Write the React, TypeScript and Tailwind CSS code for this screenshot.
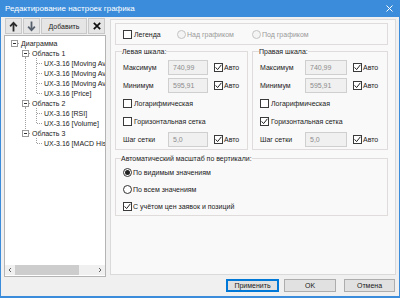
import React from 'react';

type Cell = 'none' | 'vline' | 'tee' | 'ell' | 'boxRoot' | 'boxMid' | 'boxLast';

const TreeCell: React.FC<{ kind: Cell }> = ({ kind }) => {
  const dot = { stroke: '#a0a0a0', strokeWidth: 1, strokeDasharray: '1 1' };
  return (
    <svg width="11" height="10" viewBox="0 0 11 10" className="shrink-0" shapeRendering="crispEdges">
      {(kind === 'vline' || kind === 'tee') && <line x1="5.5" y1="0" x2="5.5" y2="10" {...dot} />}
      {kind === 'ell' && <line x1="5.5" y1="0" x2="5.5" y2="6" {...dot} />}
      {(kind === 'tee' || kind === 'ell') && <line x1="6" y1="5.5" x2="11" y2="5.5" {...dot} />}
      {(kind === 'boxMid' || kind === 'boxLast') && <line x1="5.5" y1="0" x2="5.5" y2="2" {...dot} />}
      {kind === 'boxMid' && <line x1="5.5" y1="9" x2="5.5" y2="10" {...dot} />}
      {kind.startsWith('box') && (
        <>
          <line x1="9" y1="5.5" x2="11" y2="5.5" {...dot} />
          <rect x="2.5" y="2.5" width="6" height="6" fill="#fff" stroke="#9a9a9a" />
          <line x1="4" y1="5.5" x2="7" y2="5.5" stroke="#333" />
        </>
      )}
    </svg>
  );
};

const tree: { text: string; cells: Cell[] }[] = [
  { text: 'Диаграмма', cells: ['boxRoot'] },
  { text: 'Область 1', cells: ['none', 'boxMid'] },
  { text: 'UX-3.16 [Moving Average]', cells: ['none', 'vline', 'tee'] },
  { text: 'UX-3.16 [Moving Average]', cells: ['none', 'vline', 'tee'] },
  { text: 'UX-3.16 [Moving Average]', cells: ['none', 'vline', 'tee'] },
  { text: 'UX-3.16 [Price]', cells: ['none', 'vline', 'ell'] },
  { text: 'Область 2', cells: ['none', 'boxMid'] },
  { text: 'UX-3.16 [RSI]', cells: ['none', 'vline', 'tee'] },
  { text: 'UX-3.16 [Volume]', cells: ['none', 'vline', 'ell'] },
  { text: 'Область 3', cells: ['none', 'boxLast'] },
  { text: 'UX-3.16 [MACD Histogram]', cells: ['none', 'none', 'ell'] },
];

const Check: React.FC<{ checked?: boolean }> = ({ checked }) => (
  <span className="w-[9px] h-[9px] border border-[#3a3a3a] bg-white flex items-center justify-center shrink-0">
    {checked && (
      <svg width="7" height="7" viewBox="0 0 7 7">
        <path d="M0.6 3.4 L2.6 5.6 L6.4 0.8" stroke="#222" strokeWidth="1" fill="none" />
      </svg>
    )}
  </span>
);

const Radio: React.FC<{ checked?: boolean; disabled?: boolean }> = ({ checked, disabled }) => (
  <span
    className={`w-[9px] h-[9px] rounded-full border flex items-center justify-center shrink-0 ${
      disabled ? 'border-[#c4c4c4] bg-[#f4f4f4]' : 'border-[#333] bg-white'
    }`}
  >
    {checked && <span className="w-[5px] h-[5px] rounded-full bg-[#222]" />}
  </span>
);

const ValueRow: React.FC<{ label: string; value: string; inputW: string }> = ({ label, value, inputW }) => (
  <div className="h-[15px] flex items-center">
    <span className="w-[45px] shrink-0 whitespace-nowrap">{label}</span>
    <span className={`${inputW} h-[15px] shrink-0 border border-[#cfcfcf] bg-[#f0f0f0] text-[#8c8c8c] flex items-center pl-[4px]`}>
      {value}
    </span>
    <span className="ml-[6px] flex items-center gap-[1px]">
      <Check checked />
      <span>Авто</span>
    </span>
  </div>
);

const Scale: React.FC<{ title: string; width: string; inputW: string; grid: boolean }> = ({ title, width, inputW, grid }) => (
  <fieldset className={`${width} h-[103px] border border-[#e0dcdc] px-[6px] pt-[4px]`}>
    <legend className="leading-[9px]">{title}</legend>
    <div className="flex flex-col gap-[3px] pl-[1px]">
      <ValueRow label="Максимум" value="740,99" inputW={inputW} />
      <ValueRow label="Минимум" value="595,91" inputW={inputW} />
      <div className="h-[15px] flex items-center gap-[2px]">
        <Check />
        <span>Логарифмическая</span>
      </div>
      <div className="h-[15px] flex items-center gap-[2px]">
        <Check checked={grid} />
        <span>Горизонтальная сетка</span>
      </div>
      <ValueRow label="Шаг сетки" value="5,0" inputW={inputW} />
    </div>
  </fieldset>
);

const Btn: React.FC<{ w: string; children: React.ReactNode; focus?: boolean }> = ({ w, children, focus }) => (
  <div
    className={`${w} h-[13px] bg-[#e1e1e1] flex items-center justify-center border ${
      focus ? 'border-[#0078d7] shadow-[inset_0_0_0_1px_#0078d7]' : 'border-[#adadad]'
    }`}
  >
    {children}
  </div>
);

export default function App() {
  return (
    <div
      className="w-[400px] h-[298px] bg-[#f0f0f0] flex flex-col border-x border-b-2 border-[#3b8ddb] overflow-hidden text-[7px] text-[#1a1a1a] leading-none"
      style={{ fontFamily: '"Liberation Sans", Arial, sans-serif' }}
    >
      {/* title bar */}
      <div className="h-[17px] shrink-0 bg-[#3b8ddb] flex items-center justify-between pl-[4px] pr-[6px] text-white text-[8px]">
        <span>Редактирование настроек графика</span>
        <svg width="7" height="7" viewBox="0 0 7 7">
          <path d="M0.5 0.5 L6.5 6.5 M6.5 0.5 L0.5 6.5" stroke="#fff" strokeWidth="1" />
        </svg>
      </div>

      <div className="h-[260px] shrink-0 flex">
        {/* left column */}
        <div className="ml-[3px] w-[102px] flex flex-col">
          <div className="mt-[1px] h-[16px] flex gap-[1px] pl-[1px]">
            <div className="w-[17px] h-[16px] bg-[#e5e5e5] border border-[#c8c8c8] flex items-center justify-center">
              <svg width="9" height="11" viewBox="0 0 9 11">
                <path d="M4.5 0.5 L8.5 4.8 L7.2 6 L5.4 4.1 L5.4 10.5 L3.6 10.5 L3.6 4.1 L1.8 6 L0.5 4.8 Z" fill="#2a2a2a" />
              </svg>
            </div>
            <div className="w-[17px] h-[16px] bg-[#e5e5e5] border border-[#c8c8c8] flex items-center justify-center">
              <svg width="9" height="11" viewBox="0 0 9 11">
                <path d="M4.5 10.5 L8.5 6.2 L7.2 5 L5.4 6.9 L5.4 0.5 L3.6 0.5 L3.6 6.9 L1.8 5 L0.5 6.2 Z" fill="#56606c" />
              </svg>
            </div>
            <div className="w-[46px] h-[16px] bg-[#e5e5e5] border border-[#c8c8c8] flex items-center justify-center">
              Добавить
            </div>
            <div className="w-[17px] h-[16px] bg-[#e5e5e5] border border-[#c8c8c8] flex items-center justify-center">
              <svg width="8" height="8" viewBox="0 0 8 8">
                <path d="M0.8 0.8 L7.2 7.2 M7.2 0.8 L0.8 7.2" stroke="#111" strokeWidth="1.7" />
              </svg>
            </div>
          </div>
          <div className="mt-[1px] h-[242px] border border-[#b4b4b4] bg-white flex flex-col overflow-hidden">
            <div className="flex-1 pt-[2px] pl-[4px] overflow-hidden">
              {tree.map((r, i) => (
                <div key={i} className="h-[10px] flex items-center whitespace-nowrap">
                  {r.cells.map((c, j) => (
                    <TreeCell key={j} kind={c} />
                  ))}
                  <span className={r.cells.length === 3 ? 'ml-[2px]' : 'ml-[1px]'}>{r.text}</span>
                </div>
              ))}
            </div>
            <div className="h-[10px] mb-[1px] bg-[#f0f0f0] flex items-center">
              <svg width="10" height="10" viewBox="0 0 10 10" className="shrink-0">
                <path d="M6 3 L4 5 L6 7" stroke="#606060" strokeWidth="1" fill="none" />
              </svg>
              <div className="w-[64px] h-[10px] bg-[#cdcdcd]" />
              <div className="flex-1" />
              <svg width="10" height="10" viewBox="0 0 10 10" className="shrink-0">
                <path d="M4 3 L6 5 L4 7" stroke="#606060" strokeWidth="1" fill="none" />
              </svg>
            </div>
          </div>
        </div>

        {/* right panel */}
        <div className="ml-[4px] mt-[2px] w-[286px] h-[256px] border border-[#dadada] bg-[#f9f9f9] pt-[3px] pl-[4px] flex flex-col">
          <div className="w-[273px] h-[22px] border border-[#e0dcdc] flex items-center pl-[7px]">
            <div className="w-[54px] flex items-center gap-[2px]">
              <Check />
              <span>Легенда</span>
            </div>
            <div className="w-[75px] flex items-center gap-[1px] text-[#9a9a9a]">
              <Radio disabled />
              <span>Над графиком</span>
            </div>
            <div className="flex items-center gap-[1px] text-[#9a9a9a]">
              <Radio disabled />
              <span>Под графиком</span>
            </div>
          </div>

          <div className="mt-[2px] flex gap-[4px]">
            <Scale title="Левая шкала:" width="w-[133px]" inputW="w-[40px]" grid={false} />
            <Scale title="Правая шкала:" width="w-[136px]" inputW="w-[42px]" grid />
          </div>

          <fieldset className="mt-[4px] w-[273px] h-[62px] border border-[#e0dcdc] px-[7px] pt-[2px]">
            <legend className="leading-[9px] -ml-[2px]">Автоматический масштаб по вертикали:</legend>
            <div className="flex flex-col gap-[3px]">
              <div className="h-[14px] flex items-center gap-[1px]">
                <Radio checked />
                <span>По видимым значениям</span>
              </div>
              <div className="h-[14px] flex items-center gap-[1px]">
                <Radio />
                <span>По всем значениям</span>
              </div>
              <div className="h-[14px] flex items-center gap-[1px]">
                <Check checked />
                <span>С учётом цен заявок и позиций</span>
              </div>
            </div>
          </fieldset>
        </div>
      </div>

      {/* footer */}
      <div className="flex-1 flex justify-end items-start pt-[2px] pr-[4px]">
        <Btn w="w-[53px]" focus>
          Применить
        </Btn>
        <div className="w-[5px]" />
        <Btn w="w-[52px]">OK</Btn>
        <div className="w-[8px]" />
        <Btn w="w-[51px]">Отмена</Btn>
      </div>
    </div>
  );
}
